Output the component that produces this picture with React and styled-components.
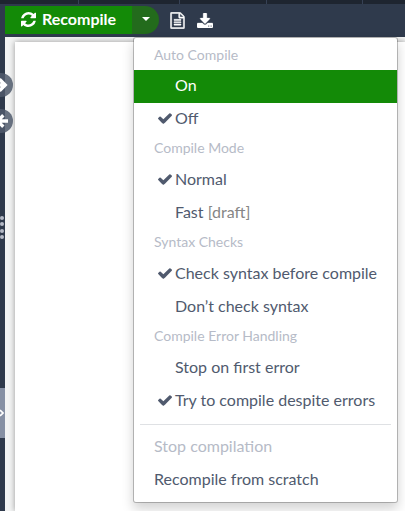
import React from "react";
import styled, { createGlobalStyle } from "styled-components";

const GlobalStyle = createGlobalStyle`
  * { box-sizing: border-box; }
  body { margin: 0; overflow: hidden; background: #2f3a4c; font-family: Lato, sans-serif; }
`;

const Screen = styled.div`
  position: relative;
  display: flex;
  flex-direction: column;
  width: 405px;
  height: 511px;
  overflow: hidden;
  background: #2f3a4c;
`;

const TabStrip = styled.div`
  display: grid;
  grid-template-columns: 79px 101px 87px 96px 1fr;
  height: 4px;
  flex: none;
  background: #1e2530;
`;

const TabSlot = styled.span`
  border-right: 1px solid #364155;
  &:last-child { border-right: 0; }
`;

const Toolbar = styled.div`
  display: flex;
  align-items: center;
  height: 33px;
  flex: none;
  padding: 0 0 1px 5px;
`;

const RecompileButton = styled.button`
  display: flex;
  align-items: center;
  width: 127px;
  height: 28px;
  padding: 0 0 2px 16px;
  gap: 6px;
  border: 0;
  background: #138a07;
  color: #fff;
  font: 700 16px/24px Lato, sans-serif;
`;

const CaretButton = styled.button`
  display: flex;
  align-items: center;
  justify-content: center;
  width: 27px;
  height: 28px;
  padding: 0 0 2px;
  border: 0;
  border-radius: 0 14px 14px 0;
  background: #236b1c;
`;

const Caret = styled.span`
  border: 4px solid transparent;
  border-top-color: #fff;
  border-bottom: 0;
`;

const ToolIcon = styled.span`
  display: flex;
  margin-left: ${(p) => p.$gap}px;
  color: #fff;
`;

const Body = styled.div`
  display: flex;
  flex: 1;
`;

const Gutter = styled.div`
  position: relative;
  width: 5px;
  flex: none;
  background: #2f3a4c;
`;

const Viewer = styled.div`
  display: flex;
  flex: 1;
  padding: 5px 0 0 10px;
  background: #f3f4f4;
`;

const Page = styled.div`
  flex: 1;
  background: #fff;
  box-shadow: 0 0 6px rgba(0, 0, 0, 0.38);
`;

const SyncButton = styled.span`
  position: absolute;
  left: -11px;
  top: ${(p) => p.$top}px;
  z-index: 1;
  display: flex;
  align-items: center;
  justify-content: flex-end;
  width: 24px;
  height: 24px;
  padding-right: 5px;
  border-radius: 50%;
  background: rgba(80, 90, 108, 0.85);
  color: #fff;
`;

const Grip = styled.div`
  position: absolute;
  left: 0;
  top: 179px;
  display: grid;
  gap: 2.4px;
`;

const Dot = styled.span`
  width: 4px;
  height: 4px;
  border-radius: 50%;
  background: #b5bac7;
`;

const PaneToggle = styled.div`
  position: absolute;
  left: 0;
  top: 351px;
  display: flex;
  align-items: center;
  width: 5px;
  height: 50px;
  color: #fff;
  background: #8690a4;
`;

const Menu = styled.div`
  position: absolute;
  left: 133px;
  top: 37px;
  z-index: 2;
  width: 265px;
  height: 466px;
  padding-top: 5px;
  border: 1px solid rgba(0, 0, 0, 0.23);
  border-radius: 3px;
  background: #fff;
  background-clip: padding-box;
  box-shadow: 0 6px 12px rgba(0, 0, 0, 0.175);
`;

const MenuHeader = styled.div`
  height: 28px;
  padding: 2px 20px 0;
  color: #b6bbc7;
  font-size: 14px;
  line-height: 20px;
  &:first-child { height: 27px; }
`;

const MenuItem = styled.div`
  display: flex;
  align-items: center;
  height: 33px;
  padding: 0 0 4px 20px;
  color: ${(p) => (p.$active ? "#fff" : p.$disabled ? "#b6bbc7" : "#505a6e")};
  background: ${(p) => (p.$active ? "#138a07" : "transparent")};
  font-size: 16px;
  line-height: 25px;
  white-space: pre;
`;

const CheckSlot = styled.span`
  display: flex;
  justify-content: center;
  width: 21px;
  padding-top: 2px;
`;

const Muted = styled.span`
  color: #868686;
`;

const Divider = styled.div`
  height: 1px;
  margin: 6px;
  background: #dfe1e4;
`;

const PATHS = {
  refresh: "M1511 1056q0 5-1 7-64 268-268 434.5t-478 166.5q-146 0-282.5-55t-243.5-157l-129 129q-19 19-45 19t-45-19-19-45v-448q0-26 19-45t45-19h448q26 0 45 19t19 45-19 45l-137 137q71 66 161 102t187 36q134 0 250-65t186-179q11-17 53-117 8-23 30-23h192q13 0 22.5 9.5t9.5 22.5zm25-800v448q0 26-19 45t-45 19h-448q-26 0-45-19t-19-45 19-45l138-138q-148-137-349-137-134 0-250 65t-186 179q-11 17-53 117-8 23-30 23h-199q-13 0-22.5-9.5t-9.5-22.5v-7q65-268 270-434.5t480-166.5q146 0 284 55.5t245 156.5l130-129q19-19 45-19t45 19 19 45z",
  check: "M1671 566q0 40-28 68l-724 724-136 136q-28 28-68 28t-68-28l-136-136-362-362q-28-28-28-68t28-68l136-136q28-28 68-28t68 28l294 295 656-657q28-28 68-28t68 28l136 136q28 28 28 68z",
  download: "M1344 1344q0-26-19-45t-45-19-45 19-19 45 19 45 45 19 45-19 19-45zm256 0q0-26-19-45t-45-19-45 19-19 45 19 45 45 19 45-19 19-45zm128-224v320q0 40-28 68t-68 28h-1472q-40 0-68-28t-28-68v-320q0-40 28-68t68-28h465l135 136q58 56 136 56t136-56l136-136h464q40 0 68 28t28 68zm-325-569q17 41-14 70l-448 448q-18 19-45 19t-45-19l-448-448q-31-29-14-70 17-39 59-39h256v-448q0-26 19-45t45-19h256q26 0 45 19t19 45v448h256q42 0 59 39z",
  file: "M1596 380q28 28 48 76t20 88v1152q0 40-28 68t-68 28h-1344q-40 0-68-28t-28-68v-1600q0-40 28-68t68-28h896q40 0 88 20t76 48zm-444-244v376h376q-10-29-22-41l-313-313q-12-12-41-22zm384 1528v-1024h-416q-40 0-68-28t-28-68v-416h-768v1536h1280zm-1024-864q0-14 9-23t23-9h704q14 0 23 9t9 23v64q0 14-9 23t-23 9h-704q-14 0-23-9t-9-23v-64zm736 224q14 0 23 9t9 23v64q0 14-9 23t-23 9h-704q-14 0-23-9t-9-23v-64q0-14 9-23t23-9h704zm0 256q14 0 23 9t9 23v64q0 14-9 23t-23 9h-704q-14 0-23-9t-9-23v-64q0-14 9-23t23-9h704z",
};

const Icon = ({ name, box, width, height, weight = 0 }) => (
  <svg
    width={width}
    height={height}
    viewBox={box}
    fill="currentColor"
    stroke={weight ? "currentColor" : "none"}
    strokeWidth={weight}
    aria-hidden="true"
  >
    <path d={PATHS[name]} />
  </svg>
);

const Arrow = ({ d }) => (
  <svg width="14" height="16" viewBox="0 0 14 16" fill="none" stroke="currentColor" strokeWidth="3.4">
    <path d={d} />
  </svg>
);

const groups = [
  { title: "Auto Compile", items: [{ label: "On", active: true }, { label: "Off", checked: true }] },
  { title: "Compile Mode", items: [{ label: "Normal", checked: true }, { label: "Fast ", note: "[draft]" }] },
  { title: "Syntax Checks", items: [{ label: "Check syntax before compile", checked: true }, { label: "Don’t check syntax" }] },
  { title: "Compile Error Handling", items: [{ label: "Stop on first error" }, { label: "Try to compile despite errors", checked: true }] },
];

export default function App() {
  return (
    <>
      <GlobalStyle />
      <Screen>
        <TabStrip>
          <TabSlot /><TabSlot /><TabSlot /><TabSlot /><TabSlot />
        </TabStrip>
        <Toolbar>
          <RecompileButton>
            <Icon name="refresh" box="0 128 1536 1536" width={15} height={15} />
            Recompile
          </RecompileButton>
          <CaretButton aria-label="Compile options"><Caret /></CaretButton>
          <ToolIcon $gap={11}><Icon name="file" box="100 -30 1592 1852" width={15} height={17} weight={50} /></ToolIcon>
          <ToolIcon $gap={12}><Icon name="download" box="64 0 1664 1536" width={16} height={15} weight={30} /></ToolIcon>
        </Toolbar>
        <Body>
          <Gutter>
            <SyncButton $top={36}><Arrow d="M0 8H11M5.5 2.3l5.7 5.7-5.7 5.7" /></SyncButton>
            <SyncButton $top={72}><Arrow d="M14 8H4M9.3 2.3L3.6 8l5.7 5.7" /></SyncButton>
            <Grip><Dot /><Dot /><Dot /><Dot /></Grip>
            <PaneToggle>
              <svg width="4" height="8" viewBox="0 0 4 8" fill="none" stroke="currentColor" strokeWidth="1.7">
                <path d="M0 1l3 3-3 3" />
              </svg>
            </PaneToggle>
          </Gutter>
          <Viewer><Page /></Viewer>
        </Body>
        <Menu>
          {groups.map((g) => (
            <React.Fragment key={g.title}>
              <MenuHeader>{g.title}</MenuHeader>
              {g.items.map((it) => (
                <MenuItem key={it.label} $active={it.active}>
                  <CheckSlot>
                    {it.checked && <Icon name="check" box="121 334 1550 1188" width={14} height={11} />}
                  </CheckSlot>
                  {it.label}
                  {it.note && <Muted>{it.note}</Muted>}
                </MenuItem>
              ))}
            </React.Fragment>
          ))}
          <Divider />
          <MenuItem $disabled>Stop compilation</MenuItem>
          <MenuItem>Recompile from scratch</MenuItem>
        </Menu>
      </Screen>
    </>
  );
}
